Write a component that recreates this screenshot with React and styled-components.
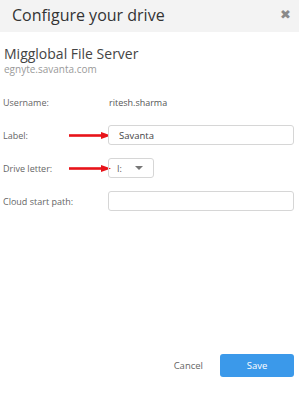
import { createGlobalStyle, styled } from "styled-components";

const Global = createGlobalStyle`
  html, body {
    margin: 0;
    padding: 0;
    background: #ffffff;
  }
  body {
    font-family: "Open Sans", "Liberation Sans", sans-serif;
  }
`;

function Arrow() {
  return (
    <ArrowSvg width="42" height="7" viewBox="0 0 42 7">
      <rect x="0" y="2.2" width="34" height="2.6" fill="#e8141a" />
      <polygon points="32,0 42,3.5 32,7" fill="#e8141a" />
    </ArrowSvg>
  );
}

export default function App() {
  return (
    <>
      <Global />
      <Dialog>
        <Header>
          <Title>Configure your drive</Title>
          <Close>✖</Close>
        </Header>
        <Body>
          <Server>
            <ServerName>Migglobal File Server</ServerName>
            <ServerHost>egnyte.savanta.com</ServerHost>
          </Server>
          <Form>
            <Row>
              <LabelCell>
                <Label>Username:</Label>
              </LabelCell>
              <Value>ritesh.sharma</Value>
            </Row>
            <Row>
              <LabelCell>
                <Label>Label:</Label>
                <Arrow />
              </LabelCell>
              <Input defaultValue="Savanta" />
            </Row>
            <Row>
              <LabelCell>
                <Label>Drive letter:</Label>
                <Arrow />
              </LabelCell>
              <Select>
                <span>I:</span>
                <Caret />
              </Select>
            </Row>
            <Row>
              <LabelCell>
                <Label>Cloud start path:</Label>
              </LabelCell>
              <Input defaultValue="" />
            </Row>
          </Form>
        </Body>
        <Footer>
          <CancelButton>Cancel</CancelButton>
          <SaveButton>Save</SaveButton>
        </Footer>
      </Dialog>
    </>
  );
}

const Dialog = styled.div`
  width: 299px;
  height: 417px;
  display: flex;
  flex-direction: column;
  background: #fff;
`;

const Header = styled.div`
  height: 32px;
  background: #f3f3f3;
  display: flex;
  align-items: center;
  justify-content: space-between;
  padding: 0 8px 0 12px;
`;

const Title = styled.div`
  font-size: 16px;
  color: #333;
  line-height: 1;
  margin-top: -2px;
`;

const Close = styled.div`
  font-family: "DejaVu Sans", sans-serif;
  font-size: 13px;
  color: #8a8a8a;
  margin-top: -3px;
`;

const Body = styled.div`
  flex: 1;
  padding: 13px 5px 0 3px;
`;

const Server = styled.div`
  padding-left: 1px;
`;

const ServerName = styled.div`
  font-size: 14px;
  color: #444;
  line-height: 18px;
`;

const ServerHost = styled.div`
  font-size: 10px;
  color: #9a9a9a;
  line-height: 12px;
`;

const Form = styled.div`
  margin-top: 17px;
  display: flex;
  flex-direction: column;
  gap: 13px;
`;

const Row = styled.div`
  display: grid;
  grid-template-columns: 105px 1fr;
  align-items: center;
  min-height: 20px;
`;

const LabelCell = styled.div`
  display: flex;
  align-items: center;
  justify-content: space-between;
`;

const Label = styled.span`
  font-size: 9px;
  color: #666;
`;

const ArrowSvg = styled.svg`
  display: block;
  margin-right: -3px;
`;

const Value = styled.span`
  font-size: 9px;
  color: #555;
  padding-left: 1px;
`;

const Input = styled.input`
  box-sizing: border-box;
  height: 20px;
  width: 100%;
  border: 1px solid #d6d6d6;
  border-radius: 3px;
  padding: 0 10px;
  font-family: inherit;
  font-size: 9.5px;
  color: #444;
  outline: none;
`;

const Select = styled.div`
  box-sizing: border-box;
  width: 46px;
  height: 20px;
  border: 1px solid #d6d6d6;
  border-radius: 3px;
  display: flex;
  align-items: center;
  justify-content: space-between;
  padding: 0 10px 0 8px;
  font-size: 9px;
  color: #555;
`;

const Caret = styled.span`
  width: 0;
  height: 0;
  border-left: 4px solid transparent;
  border-right: 4px solid transparent;
  border-top: 4px solid #777;
`;

const Footer = styled.div`
  display: flex;
  justify-content: flex-end;
  align-items: center;
  gap: 17px;
  padding: 0 5px 40px 0;
`;

const CancelButton = styled.button`
  background: none;
  border: none;
  padding: 0;
  font-family: inherit;
  font-size: 9.5px;
  color: #666;
`;

const SaveButton = styled.button`
  width: 74px;
  height: 23px;
  border: none;
  border-radius: 3px;
  background: #3b99ea;
  color: #fff;
  font-family: inherit;
  font-size: 9.5px;
`;
